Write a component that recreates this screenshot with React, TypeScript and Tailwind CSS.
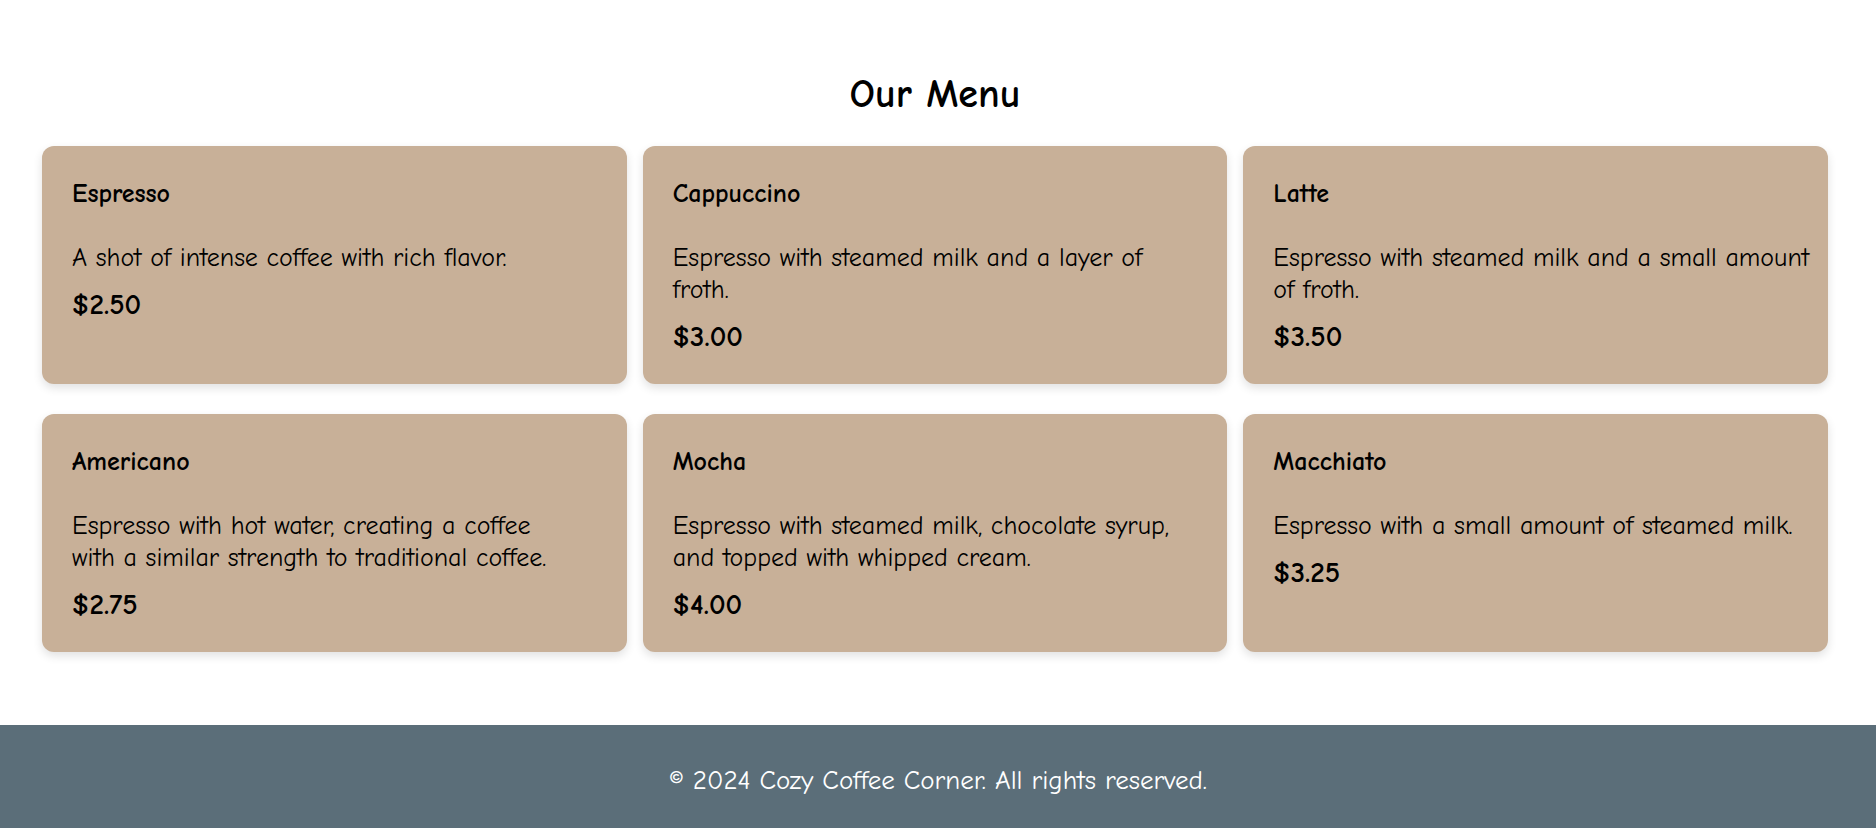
const menuItems = [
  { name: "Espresso", lines: ["A shot of intense coffee with rich flavor."], price: "$2.50" },
  { name: "Cappuccino", lines: ["Espresso with steamed milk and a layer of", "froth."], price: "$3.00" },
  { name: "Latte", lines: ["Espresso with steamed milk and a small amount", "of froth."], price: "$3.50" },
  { name: "Americano", lines: ["Espresso with hot water, creating a coffee", "with a similar strength to traditional coffee."], price: "$2.75" },
  { name: "Mocha", lines: ["Espresso with steamed milk, chocolate syrup,", "and topped with whipped cream."], price: "$4.00" },
  { name: "Macchiato", lines: ["Espresso with a small amount of steamed milk."], price: "$3.25" },
];

interface MenuCardProps {
  name: string;
  lines: string[];
  price: string;
}

function MenuCard({ name, lines, price }: MenuCardProps) {
  return (
    <div className="bg-[#c8b098] rounded-xl px-[30px] pt-8 pb-[31px] shadow-[0_4px_10px_rgba(0,0,0,0.12)]">
      <h3 className="text-[26px] leading-8 font-bold">{name}</h3>
      <p className="mt-8 text-[26px] leading-8">
        {lines.map((line) => (
          <span key={line} className="block whitespace-nowrap">{line}</span>
        ))}
      </p>
      <p className="mt-[15px] text-[29px] leading-8 font-bold">{price}</p>
    </div>
  );
}

export default function App() {
  return (
    <div className="min-h-screen bg-white text-black font-['Comic_Sans_MS','Comic_Neue','DejaVu_Sans',sans-serif]">
      <main className="pl-[42px] pr-[48px] pt-[74px] pb-[73px]">
        <h2 className="text-center text-[40px] leading-10 font-bold">Our Menu</h2>
        <div className="mt-8 grid grid-cols-3 gap-x-4 gap-y-[30px]">
          {menuItems.map((item) => (
            <MenuCard key={item.name} {...item} />
          ))}
        </div>
      </main>
      <footer className="bg-[#5b6e79] py-10 text-center">
        <p className="text-white text-[27px] leading-8">© 2024 Cozy Coffee Corner. All rights reserved.</p>
      </footer>
    </div>
  );
}
